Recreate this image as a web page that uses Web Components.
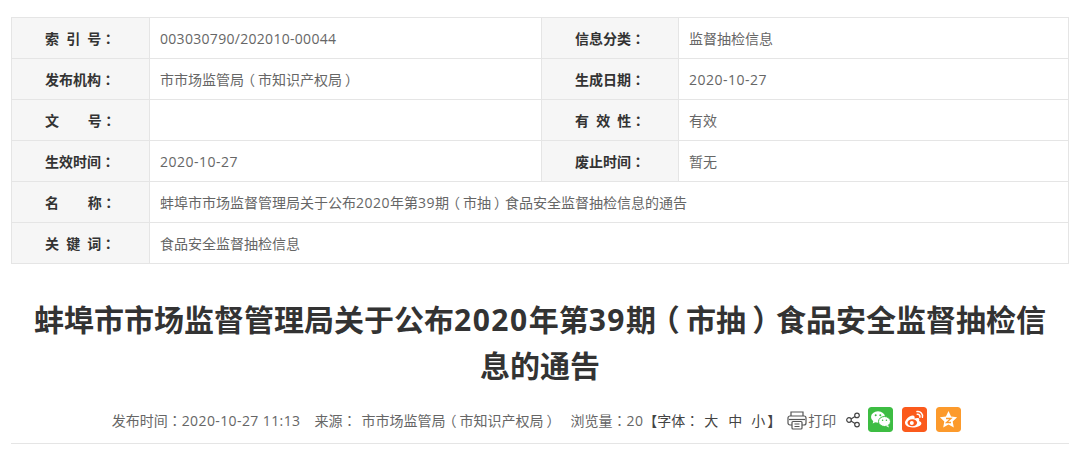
<!DOCTYPE html>
<html lang="zh-CN">
<head>
<meta charset="utf-8">
<title>信息公开</title>
<style>
  html, body { margin: 0; background: #fff; }
  body { font-family: "Noto Sans CJK SC", "Noto Sans", sans-serif; }
  /* digitos y signos de puntuacion dentro del contenido con slot */
  .n { font-family: "Open Sans", sans-serif; letter-spacing: var(--ns, .5px); }
  .p { font-family: "Noto Sans CJK TC", sans-serif; }
  .pp { display: inline-block; width: 1em; text-align: center; font-feature-settings: "palt"; }
</style>
</head>
<body>
<article-page>
  <info-table>
    <info-cell label="索 引 号：" style="--ns:.3px">003030790/202010-00044</info-cell>
    <info-cell label="信息分类：">监督抽检信息</info-cell>
    <info-cell label="发布机构：">市市场监管局（市知识产权局）</info-cell>
    <info-cell label="生成日期：">2020-10-27</info-cell>
    <info-cell label="文    号："></info-cell>
    <info-cell label="有 效 性：">有效</info-cell>
    <info-cell label="生效时间：">2020-10-27</info-cell>
    <info-cell label="废止时间：">暂无</info-cell>
    <info-cell wide label="名    称：">蚌埠市市场监督管理局关于公布2020年第39期（市抽）食品安全监督抽检信息的通告</info-cell>
    <info-cell wide label="关 键 词：">食品安全监督抽检信息</info-cell>
  </info-table>
  <article-title>蚌埠市市场监督管理局关于公布2020年第39期（市抽）食品安全监督抽检信息的通告</article-title>
  <article-meta></article-meta>
</article-page>

<script>
// Separa digitos y puntuacion para darles su propia fuente
function mix(text) {
  return text
    .replace(/\d[\d\-\/: ]*/g, m => `<span class="n">${m}</span>`)
    .replace(/：/g, m => `<span class="p" lang="zh-TW">${m}</span>`)
    .replace(/[（）]/g, m => `<span class="pp">${m}</span>`);
}

const mixStyles = `
  .n { font-family: "Open Sans", sans-serif; letter-spacing: var(--ns, .5px); }
  .p { font-family: "Noto Sans CJK TC", sans-serif; }
  .pp { display: inline-block; width: 1em; text-align: center; font-feature-settings: "palt"; }
`;

// Contenedor general de la pagina
class ArticlePage extends HTMLElement {
  constructor() {
    super();
    this.attachShadow({ mode: 'open' });
    this.shadowRoot.innerHTML = `
      <style>
        :host { display: block; padding: 17px 13px 0 11px; }
      </style>
      <slot></slot>`;
  }
}

// Tabla de datos del documento
class InfoTable extends HTMLElement {
  constructor() {
    super();
    this.attachShadow({ mode: 'open' });
    this.shadowRoot.innerHTML = `
      <style>
        :host {
          display: grid;
          grid-template-columns: 138px 392px 137px 1fr;
          border-top: 1px solid #e5e5e5;
          border-left: 1px solid #e5e5e5;
        }
      </style>
      <slot></slot>`;
  }
}

// Celda: etiqueta + valor
class InfoCell extends HTMLElement {
  constructor() {
    super();
    this.attachShadow({ mode: 'open' });
    this.shadowRoot.innerHTML = `
      <style>
        ${mixStyles}
        :host { display: grid; grid-column: span 2; grid-template-columns: subgrid; height: 41px; }
        :host([wide]) { grid-column: span 4; }
        .label, .value {
          box-sizing: border-box;
          display: flex;
          align-items: center;
          border-right: 1px solid #e5e5e5;
          border-bottom: 1px solid #e5e5e5;
          font-size: 14px;
        }
        .label {
          background: #f6f6f6;
          color: #333;
          font-weight: 700;
          padding-left: 33px;
          white-space: pre;
          word-spacing: 4px;
        }
        .value { color: #666; padding-left: 10px; }
        :host([wide]) .value { grid-column: span 3; }
      </style>
      <div class="label"><span>${mix(this.getAttribute('label'))}</span></div>
      <div class="value"><span><slot></slot></span></div>`;
  }
  connectedCallback() {
    this.innerHTML = mix(this.textContent);
  }
}

// Titulo principal
class ArticleTitle extends HTMLElement {
  constructor() {
    super();
    this.attachShadow({ mode: 'open' });
    this.shadowRoot.innerHTML = `
      <style>
        :host {
          display: block;
          margin-top: 32px;
          padding: 0 12px;
          font-size: 30px;
          line-height: 45px;
          font-weight: 700;
          color: #333;
          text-align: center;
          --ns: 1.5px;
        }
      </style>
      <slot></slot>`;
  }
  connectedCallback() {
    // el salto de linea cae siempre en el mismo sitio
    this.innerHTML = mix(this.textContent).replace('息的通告', '<br>息的通告');
  }
}

// Linea de datos con iconos para compartir
class ArticleMeta extends HTMLElement {
  constructor() {
    super();
    this.attachShadow({ mode: 'open' });
    this.shadowRoot.innerHTML = `
      <style>
        ${mixStyles}
        :host {
          display: flex;
          align-items: center;
          justify-content: center;
          height: 38px;
          margin-top: 14px;
          padding: 0 7px 4px 0;
          border-bottom: 1px solid #e5e5e5;
          font-size: 14px;
          color: #666;
          white-space: pre;
          --ns: .4px;
        }
        .size { color: #444; display: flex; }
        .size b { font-weight: 400; }
        .print { display: flex; align-items: center; margin-left: 6px; }
        .share { margin: 0 8px 0 10px; }
        .btn { width: 25px; height: 25px; border-radius: 3px; margin: 0 9px 2px 0; display: block; }
        .btn:last-child { margin-right: 0; }
      </style>
      <span>${mix('发布时间：2020-10-27 11:13')}</span>
      <span style="margin-left:14px">${mix('来源：')}</span>
      <span style="margin-left:5px">${mix('市市场监管局（市知识产权局）')}</span>
      <span style="margin-left:13px">${mix('浏览量：20')}</span>
      <span class="size">
        <b>【字体${mix('：')}</b><b style="margin-left:5px">大</b><b style="margin-left:10px">中</b><b style="margin-left:9px">小</b><b style="margin-left:2px">】</b>
      </span>
      <span class="print">
        <svg width="20" height="20" viewBox="0 0 20 20" fill="none" stroke="#555" stroke-width="1.2">
          <path d="M4 6V2h12v4"/>
          <path d="M5 15H3a2 2 0 0 1-2-2V8a2 2 0 0 1 2-2h14a2 2 0 0 1 2 2v5a2 2 0 0 1-2 2h-2"/>
          <path d="M2 9.500h16"/>
          <rect x="5" y="11.500" width="10" height="7.500" rx="1"/>
          <path d="M7.500 14h5M7.500 16.500h5"/>
        </svg>
        <span style="margin-left:1px">打印</span>
      </span>
      <svg class="share" width="14" height="16" viewBox="0 0 14 16" fill="none" stroke="#444" stroke-width="1.2">
        <circle cx="3" cy="8" r="2.300"/>
        <circle cx="11" cy="3.400" r="2.300"/>
        <circle cx="11" cy="12.600" r="2.300"/>
        <path d="M5 6.900l4-2.400M5 9.100l4 2.400"/>
      </svg>
      <svg class="btn" viewBox="0 0 25 25">
        <rect width="25" height="25" rx="3" fill="#3dbd43"/>
        <ellipse cx="10" cy="10" rx="7" ry="5.800" fill="#fff"/>
        <path d="M5.500 13.500l-.8 3 3-1.600z" fill="#fff"/>
        <ellipse cx="16.500" cy="14.500" rx="6" ry="5" fill="#fff" stroke="#3dbd43" stroke-width="1"/>
        <path d="M20 18l1 2.500-3-1.400z" fill="#fff"/>
        <circle cx="7.700" cy="8.300" r="1" fill="#3dbd43"/>
        <circle cx="12.300" cy="8.300" r="1" fill="#3dbd43"/>
        <circle cx="14.600" cy="13.200" r=".8" fill="#3dbd43"/>
        <circle cx="18.400" cy="13.200" r=".8" fill="#3dbd43"/>
      </svg>
      <svg class="btn" viewBox="0 0 25 25">
        <rect width="25" height="25" rx="3" fill="#fb5a1c"/>
        <path d="M10.500 20.500c-4 0-7.500-1.900-7.500-4.700 0-2.800 4.400-7.200 7.600-7.200 2 0 2.400 1.500 1.900 3 2.400-.9 4.800-.8 4.800 1 .1.6-.2 1.100-.3 1.300 1.500.4 2.400 1.300 2.400 2.600 0 2.300-3.900 4-8.900 4z" fill="#fff"/>
        <ellipse cx="10.300" cy="15.800" rx="4.800" ry="3.500" fill="#fb5a1c"/>
        <circle cx="9.800" cy="16" r="2" fill="#fff"/>
        <path d="M15 4.600c3.400-.7 6.300 2.300 5.400 5.700M15.300 7.300c1.800-.3 3 1.200 2.600 2.900" fill="none" stroke="#fff" stroke-width="1.500" stroke-linecap="round"/>
      </svg>
      <svg class="btn" viewBox="0 0 25 25">
        <rect width="25" height="25" rx="3" fill="#fc9a2c"/>
        <path d="M12.500 4l2.600 5.500 6 .8-4.400 4.100 1.100 6-5.300-2.900-5.300 2.900 1.100-6-4.400-4.100 6-.8z" fill="#fff"/>
        <path d="M10 11.500h5l-4.500 4h4.500" fill="none" stroke="#fc9a2c" stroke-width="1.300"/>
      </svg>`;
  }
}

customElements.define('article-page', ArticlePage);
customElements.define('info-table', InfoTable);
customElements.define('info-cell', InfoCell);
customElements.define('article-title', ArticleTitle);
customElements.define('article-meta', ArticleMeta);
</script>
</body>
</html>
